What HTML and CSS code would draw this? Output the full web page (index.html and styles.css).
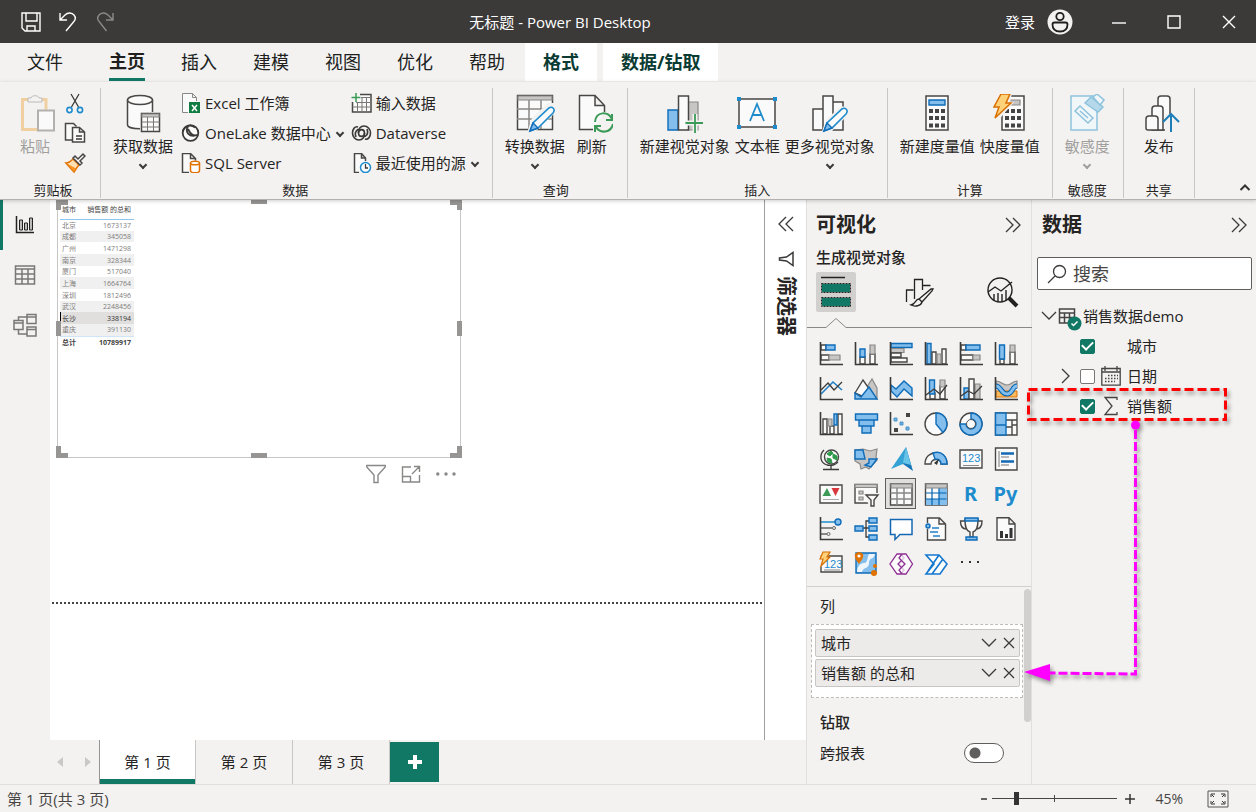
FILE: index.html
```html
<!DOCTYPE html>
<html lang="zh-CN">
<head>
<meta charset="utf-8">
<title>无标题 - Power BI Desktop</title>
<link rel="stylesheet" href="styles.css">
</head>
<body>
<header class="titlebar">
  <div class="quick">
    <button aria-label="保存"><svg width="20" height="20" viewBox="0 0 20 20"><path d="M1 1h18v18H4l-3-3zM5 1v8h11V1M6 19v-5h8v5"/></svg></button>
    <button aria-label="撤消"><svg width="20" height="20" viewBox="0 0 20 20"><path d="M2 1v7h7M2 8l5-5c3-3 7-2.500 9 0s1.500 5-.5 7L8 19"/></svg></button>
    <button aria-label="恢复" class="off"><svg width="20" height="20" viewBox="0 0 20 20"><path d="M18 1v7h-7M18 8l-5-5C10 0 6 .5 4 3s-1.500 5 .5 7l7 9"/></svg></button>
  </div>
  <h1>无标题 - Power BI Desktop</h1>
  <div class="account">
    <button class="login">登录<svg width="26" height="26" viewBox="0 0 26 26"><circle cx="13" cy="13" r="12.500" fill="#f3f2f1" stroke="none"/><g stroke="#201f1e" stroke-width="1.800"><circle cx="13" cy="7.500" r="3.700"/><path d="M7.500 13.500h11q2 0 2 2 0 7-7.500 7t-7.500-7q0-2 2-2z"/></g></svg></button>
    <button class="win" aria-label="最小化"><svg width="16" height="16" viewBox="0 0 16 16"><path d="M1 9h14"/></svg></button>
    <button class="win" aria-label="最大化"><svg width="16" height="16" viewBox="0 0 16 16"><path d="M2 2h12v12H2z"/></svg></button>
    <button class="win" aria-label="关闭"><svg width="16" height="16" viewBox="0 0 16 16"><path d="M2 2l12 12M14 2L2 14"/></svg></button>
  </div>
</header>

<nav class="tabs">
  <button class="file">文件</button><button class="active"><span>主页</span></button><button>插入</button><button>建模</button><button>视图</button><button>优化</button><button>帮助</button><button class="context">格式</button><button class="context">数据/钻取</button>
</nav>

<section class="ribbon">
  <div class="group clipboard">
    <div class="tools">
      <button class="big off"><svg width="36" height="40" viewBox="0 0 36 40"><path d="M8 5.500H2.500v30H17M22 5.500h4v10" stroke="#f0cfa0" stroke-width="3"/><path d="M8 8V4h3c0-3 8-3 8 0h3v4z" fill="#f3f2f1" stroke="#bbb"/><path d="M18 16.500h16v20H18z" fill="#fafafa" stroke="#b3b0ad" stroke-width="2"/></svg>粘贴</button>
      <div class="stack">
        <button aria-label="剪切"><svg width="22" height="22" viewBox="0 0 22 22"><path class="k" d="M7 2l7.500 13M15 2L7.500 15"/><g stroke="#1e8bcd" stroke-width="1.600"><circle cx="5.500" cy="18" r="2.600"/><circle cx="16" cy="18" r="2.600"/></g></svg></button>
        <button aria-label="复制"><svg width="22" height="22" viewBox="0 0 22 22"><path class="kw" d="M8 18H1.500V1.500h8l3 3"/><path class="kw" d="M8.500 5.500h7L20.500 10v10h-12zM15.500 5.500V10h5"/><path class="k" d="M12 14h6M12 17h6"/></svg></button>
        <button aria-label="格式刷"><svg width="22" height="22" viewBox="0 0 22 22"><path d="M2 11c3 0 5-2 7-4l6 6c-2 2-3 4-5 7z" fill="#ffe0b5" stroke="#e07000" stroke-width="1.600"/><path d="M3 11.500l9 5-2 3.500z" fill="#f7931e"/><path class="kw" d="M9 6l2-2 3 3 5-5 2 2-5 5 2 2-2 2z"/></svg></button>
      </div>
    </div>
    <h2>剪贴板</h2>
  </div>
  <div class="group data">
    <div class="tools">
      <button class="big"><svg width="36" height="40" viewBox="0 0 36 40"><path class="kw" d="M2.500 6v25c0 5 25 5 25 0V6"/><ellipse class="kw" cx="15" cy="6" rx="12.500" ry="4.500"/><path d="M15 18h20v21H15z" fill="#f3f2f1"/><path class="kw" d="M16.500 19.500h18v18h-18z"/><path class="g" d="M17 20h17v3H17z"/><path d="M16.500 28h18M16.500 33h18M22.500 23v14M28.500 23v14" stroke="#797775"/></svg>获取数据<i class="chev"></i></button>
      <div class="stack">
        <button class="small"><svg width="20" height="20" viewBox="0 0 20 20"><path d="M7 19.500H1.500V.5h10l4 4V8M11.500.5v4h4" fill="#fafafa" stroke="#888"/><path d="M8 9h11v11H8z" fill="#107c41"/><path d="M11 12l5 6M16 12l-5 6" stroke="#fff" stroke-width="1.500"/></svg>Excel 工作簿</button>
        <button class="small"><svg width="20" height="20" viewBox="0 0 20 20"><circle cx="9.500" cy="10" r="7.800" stroke="#3b3a39" stroke-width="1.800" fill="#fafafa"/><path stroke="#3b3a39" stroke-width="1.800" d="M7 3.500C4 8 7 15 17 12M7 6c3 6 5 7 10 6M2 7.500C4 3 10 1 14 4.500"/></svg>OneLake 数据中心<i class="chev"></i></button>
        <button class="small"><svg width="20" height="20" viewBox="0 0 20 20"><path class="kw" d="M8 19.500H1.500V.5h8l5 5v2M9.500.5v5h5"/><path d="M9.500 10v7.500c0 3 9 3 9 0V10" fill="#fff" stroke="#e07000" stroke-width="1.500"/><ellipse cx="14" cy="10" rx="4.500" ry="1.800" fill="#fff" stroke="#e07000" stroke-width="1.500"/></svg>SQL Server</button>
      </div>
      <div class="stack">
        <button class="small"><svg width="21" height="20" viewBox="0 0 21 20"><path class="kw" d="M9 1.500h11V19H1.500V9"/><path d="M10 4.500h9.500M5 9.500h15M1.500 14H20M6.500 9v10M11 5v14M15.500 5v14" stroke="#797775"/><path d="M5 0v9M.5 4.500h9" stroke="#3b9a57" stroke-width="1.500"/></svg>输入数据</button>
        <button class="small"><svg width="21" height="20" viewBox="0 0 21 20"><g stroke="#3b3a39" stroke-width="1.600"><ellipse cx="10.500" cy="10" rx="3" ry="3.400"/><path d="M13.500 10c.5 4-2 7-5.500 7S1.500 14 1.500 10 4 3 7 4M7.500 10c-.5-4 2-7 5.500-7s6.500 3 6.500 7-2.500 7-5.500 6M5 14c-2-5 1-8 4-8M16 6c2 5-1 8-4 8"/></g></svg>Dataverse</button>
        <button class="small"><svg width="21" height="20" viewBox="0 0 21 20"><path class="kw" d="M8 19.500H3.500V.5h7l4 4.500v3M10.500.5V5h4"/><circle cx="14.500" cy="14.500" r="5" fill="#fff" stroke="#1e8bcd" stroke-width="1.500"/><path class="k" d="M14.500 11v4H17"/></svg>最近使用的源<i class="chev"></i></button>
      </div>
    </div>
    <h2>数据</h2>
  </div>
  <div class="group query">
    <div class="tools">
      <button class="big"><svg width="40" height="40" viewBox="0 0 40 40"><path class="kw" d="M2.500 1.500h35v34h-35z"/><path class="g" d="M3 2h34v4H3z"/><path d="M2 15h35M2 25h35M14 6v29M26 6v29" stroke="#8a8886" stroke-width="1.500"/><path d="M12 39l5-15 16-15 8 0v9L20 38z" fill="#f3f2f1"/><path class="pen" d="M15 37l3-8 16-15c3-2 7 1 4 5L23 34z"/><path class="b" d="M15 37l3-8 5 5z"/></svg>转换数据<i class="chev"></i></button>
      <button class="big"><svg width="36" height="40" viewBox="0 0 36 40"><path class="kw" d="M16 35.500H2.500v-34H18l9.500 10V18M18 1.500v10h9.500"/><g stroke="#3b9a57" stroke-width="2"><path d="M18 28c1-11 13-11 17-3M35 20v6h-6M36 30c-2 9-13 10-17 3M18 38v-6h6"/></g></svg>刷新</button>
    </div>
    <h2>查询</h2>
  </div>
  <div class="group insert">
    <div class="tools">
      <button class="big"><svg width="36" height="40" viewBox="0 0 36 40"><path class="b" d="M1 16h10v20H1z"/><path class="g" d="M21 8h10v28H21z"/><path class="kw" d="M11.500 2h10v34h-10z"/><path d="M28 20v19M18 29h19" stroke="#f3f2f1" stroke-width="5"/><path d="M28 20v19M18.500 29H37" stroke="#3b9a57" stroke-width="1.800"/></svg>新建视觉对象</button>
      <button class="big"><svg width="40" height="40" viewBox="0 0 40 40"><path class="kw" d="M2 5h36v28H2z"/><path d="M13 27l7-17 7 17M15.500 21h9" stroke="#1e8bcd" stroke-width="1.800"/><path d="M0 3h4v4H0zM36 3h4v4h-4zM0 31h4v4H0zM36 31h4v4h-4z" fill="#1e8bcd"/></svg>文本框</button>
      <button class="big"><svg width="38" height="40" viewBox="0 0 38 40"><path class="kw" d="M2 15h10v21H2zM22 8h10v28H22zM12 2h10v34H12z"/><path d="M10 40l5-14 15-14 8 2v6L20 38z" fill="#f3f2f1"/><path class="pen" d="M13 37l3-8 15-14c3-2 7 1 4 5L21 34z"/><path class="b" d="M13 37l3-8 5 5z"/></svg>更多视觉对象<i class="chev"></i></button>
    </div>
    <h2>插入</h2>
  </div>
  <div class="group calc">
    <div class="tools">
      <button class="big"><svg width="26" height="40" viewBox="0 0 26 40"><path class="kw" d="M2 2h22v34H2z"/><path class="b" d="M5 6h16v5H5z"/><path d="M5 17h16M5 24h16M5 31.500h16" stroke="#444" stroke-width="4" stroke-dasharray="4 2"/></svg>新建度量值</button>
      <button class="big"><svg width="34" height="40" viewBox="0 0 34 40"><path class="kw" d="M9 2h22v34H9z"/><path class="g" d="M14 6h13v5H14z"/><path d="M12 17h16M12 24h16M12 31.500h16" stroke="#444" stroke-width="4" stroke-dasharray="4 2"/><path d="M7-1h12l-2 9h4L3 29V20H0z" fill="#f3f2f1"/><path d="M8 0h9l-4 9h5L2 24l4-11H1z" fill="#ffd27a" stroke="#d86f00" stroke-width="1.500"/></svg>快度量值</button>
    </div>
    <h2>计算</h2>
  </div>
  <div class="group sens">
    <div class="tools">
      <button class="big off"><svg width="36" height="40" viewBox="0 0 36 40"><g stroke="#8ec3de" stroke-width="1.500" fill="#f1f6f9"><path d="M2 2h26v34H2z"/><path d="M6 17l5-5 13 12-5 5zM11 17l8 7"/><path d="M16 9l6-6 12 10-5 5z" fill="#b5d9eb"/><path d="M24 3l4-3 7 6-4 5z"/></g></svg>敏感度<i class="chev"></i></button>
    </div>
    <h2>敏感度</h2>
  </div>
  <div class="group share">
    <div class="tools">
      <button class="big"><svg width="36" height="40" viewBox="0 0 36 40"><g class="kw"><path d="M14 12V5q0-3 3-3h6q3 0 3 3v31H14z"/><path d="M8 22v-7q0-3 3-3h5q3 0 3 3v21H8z"/><path d="M2 34V25q0-3 3-3h6q3 0 3 3v11H4q-2 0-2-2z"/></g><path d="M21 20h12v19H21z" fill="#f3f2f1"/><path d="M27 38V20M19 28l8-8 8 8" stroke="#1e7fb8" stroke-width="2"/></svg>发布</button>
    </div>
    <h2>共享</h2>
  </div>
  <button class="collapse" aria-label="折叠功能区"><svg width="12" height="12" viewBox="0 0 12 12"><path d="M1.500 8L6 3.500 10.500 8" stroke="#333" stroke-width="2"/></svg></button>
</section>

<main class="work">
  <div class="report">
    <div class="stage">
      <nav class="rail">
        <button class="active" aria-label="报表视图"><svg width="20" height="20" viewBox="0 0 20 20"><path d="M1.500 1v16.500H19" stroke="#222" stroke-width="1.500"/><path d="M4.500 5h3v10h-3zM9.500 8h3v7h-3zM14.500 3h3v12h-3z" fill="#bbb" stroke="#222"/></svg></button>
        <button aria-label="表格视图"><svg width="22" height="22" viewBox="0 0 22 22"><path d="M1.500 2h19v18h-19zM1.500 5h19M1.500 10h19M1.500 15h19M8 5v15M14 5v15" stroke="#7a7875" stroke-width="1.500"/></svg></button>
        <button aria-label="模型视图"><svg width="24" height="24" viewBox="0 0 24 24"><path d="M1 7.500h9v9H1zM1 10h9M14 1.500h9v9h-9zM14 4h9M14 14h9v9h-9zM14 16.500h9M5.500 7V4H14M5.500 17v4H14" stroke="#7a7875" stroke-width="1.500"/></svg></button>
      </nav>
      <div class="canvas">
        <div class="visual">
          <i class="handle tl"></i><i class="handle tc"></i><i class="handle tr"></i><i class="handle ml"></i><i class="handle mr"></i><i class="handle bl"></i><i class="handle bc"></i><i class="handle br"></i>
          <table>
            <thead><tr><th>城市</th><th>销售额 的总和</th></tr></thead>
            <tbody>
              <tr><td>北京</td><td>1673137</td></tr>
              <tr><td>成都</td><td>345058</td></tr>
              <tr><td>广州</td><td>1471298</td></tr>
              <tr><td>南京</td><td>328344</td></tr>
              <tr><td>厦门</td><td>517040</td></tr>
              <tr><td>上海</td><td>1664764</td></tr>
              <tr><td>深圳</td><td>1812496</td></tr>
              <tr><td>武汉</td><td>2248456</td></tr>
              <tr class="current"><td>长沙</td><td>338194</td></tr>
              <tr><td>重庆</td><td>391130</td></tr>
            </tbody>
            <tfoot><tr><td>总计</td><td>10789917</td></tr></tfoot>
          </table>
        </div>
        <div class="visual-actions">
          <button aria-label="筛选器"><svg width="20" height="20" viewBox="0 0 20 20"><path d="M.8 1.500h18.400v1.500L12 11v7.500H8V11L.8 3z"/></svg></button>
          <button aria-label="焦点模式"><svg width="20" height="20" viewBox="0 0 20 20"><path d="M10 3H1.500v15h17v-7M1.500 12.500h8V18M11 10l7-7M13 2.500h5.500V8"/></svg></button>
          <button aria-label="更多选项"><svg width="20" height="20" viewBox="0 0 20 20"><g fill="#8a8886" stroke="none"><circle cx="1.800" cy="10" r="1.700"/><circle cx="10" cy="10" r="1.700"/><circle cx="18" cy="10" r="1.700"/></g></svg></button>
        </div>
        <div class="page-edge"></div>
      </div>
      <aside class="filters">
        <button aria-label="展开筛选器"><svg width="16" height="16" viewBox="0 0 16 16"><path class="k" d="M8 1L1 8l7 7M15 1L8 8l7 7"/></svg></button>
        <svg width="16" height="16" viewBox="0 0 16 16"><path d="M15 1.500v13L8.500 10 1.500 9V7l7-1z" stroke="#3b3a39" stroke-width="1.500"/></svg>
        <h3>筛选器</h3>
      </aside>
    </div>
    <nav class="pages">
      <button class="step" aria-label="上一页"><svg width="6" height="10" viewBox="0 0 6 10"><path d="M6 0v10L0 5z" fill="#c8c8c8"/></svg></button>
      <button class="step" aria-label="下一页"><svg width="6" height="10" viewBox="0 0 6 10"><path d="M0 0v10l6-5z" fill="#c8c8c8"/></svg></button>
      <button class="page active">第 1 页</button><button class="page">第 2 页</button><button class="page">第 3 页</button>
      <button class="add" aria-label="新建页"><svg width="14" height="14" viewBox="0 0 14 14"><path d="M7 0v14M0 7h14" stroke="#fff" stroke-width="4"/></svg></button>
    </nav>
  </div>

  <aside class="viz">
    <header><h3>可视化</h3><button aria-label="折叠"><svg width="18" height="16" viewBox="0 0 18 16"><path class="k" d="M2 1l7 7-7 7M9 1l7 7-7 7"/></svg></button></header>
    <h4>生成视觉对象</h4>
    <div class="modes">
      <button class="active" aria-label="生成视觉对象"><svg width="40" height="40" viewBox="0 0 40 40"><path d="M5 5.500h24" stroke="#222" stroke-width="1.500"/><path d="M6 12h28v8H6zM6 26h28v8H6z" fill="#117865"/><path d="M5.500 11.500h29v9h-29zM5.500 25.500h29v9h-29z" stroke="#222" stroke-dasharray="2 1"/></svg></button>
      <button aria-label="设置视觉对象格式"><svg width="40" height="40" viewBox="0 0 40 40"><g stroke="#222" stroke-width="1.300"><path d="M7.500 30V18h7M15.500 27V7.500h8V18M23.500 13.500h8M12 33c4 2 10 1 11-3l-3-3c-4 0-3 5-8 6zM20 27L32 17l2 0-1 2-10 11"/></g></svg></button>
      <button aria-label="分析"><svg width="40" height="40" viewBox="0 0 40 40"><g stroke="#222" stroke-width="1.400"><circle cx="18" cy="18" r="12"/><path d="M6 20l7-5 6 4 11-9M12 28v-6M16 29v-8M20 29v-7M24 28V18"/><path d="M27 26l8 8" stroke-width="4"/></g></svg></button>
    </div>
    <svg class="caret" viewBox="0 0 225 10" width="225" height="10"><path d="M0 9.500h19l10-9 10 9h186" stroke="#8a8886"/></svg>
    <div class="gallery">
      <button aria-label="堆积条形图"><svg viewBox="0 0 24 24"><path class="w" d="M2 3h5v5H2zM2 13h8v5H2z"/><path class="b" d="M7 3h9v5H7z"/><path class="g" d="M10 13h11v5H10z"/><path class="ax" d="M1.500 0v22.500H24"/></svg></button>
      <button aria-label="堆积柱形图"><svg viewBox="0 0 24 24"><path class="w" d="M6 15h5v7H6zM16 12h5v10h-5z"/><path class="b" d="M6 7h5v8H6z"/><path class="g" d="M16 3h5v9h-5z"/><path class="ax" d="M1.500 0v22.500H24"/></svg></button>
      <button aria-label="簇状条形图"><svg viewBox="0 0 24 24"><path class="b" d="M2 1.500h21v4H2z"/><path class="g" d="M2 6.500h13v4H2z"/><path class="w" d="M2 11h10v4H2zM2 16h16v4H2z"/><path class="ax" d="M1.500 0v22.500H24"/></svg></button>
      <button aria-label="簇状柱形图"><svg viewBox="0 0 24 24"><path class="b" d="M3 1.500h4V22H3z"/><path class="w" d="M8 10h4v12H8zM18 7h4v15h-4z"/><path class="g" d="M13 12h4v10h-4z"/><path class="ax" d="M1.500 0v22.500H24"/></svg></button>
      <button aria-label="百分比堆积条形图"><svg viewBox="0 0 24 24"><path class="w" d="M2 3h5v5H2zM2 13h12v5H2z"/><path class="b" d="M7 3h14v5H7z"/><path class="g" d="M14 13h7v5h-7z"/><path class="ax" d="M1.500 0v22.500H24"/></svg></button>
      <button aria-label="百分比堆积柱形图"><svg viewBox="0 0 24 24"><path class="w" d="M6 17h4v5H6zM16 10h5v12h-5z"/><path class="b" d="M5.500 3h5v14h-5z"/><path class="g" d="M16 3h5v7h-5z"/><path class="ax" d="M1.500 0v22.500H24"/></svg></button>

      <button aria-label="折线图"><svg viewBox="0 0 24 24"><path d="M2 17L14 5l9 8" stroke="#2180c8" stroke-width="1.600"/><path class="k" stroke-width="1.600" d="M2 13l7-7 6 7 8-8"/><path class="ax" d="M1.500 0v22.500H24"/></svg></button>
      <button aria-label="分区图"><svg viewBox="0 0 24 24"><path class="g" d="M11 13l7-11 5 9v11z"/><path class="w" d="M1 16L9 3l7 10-4 8z"/><path class="b" d="M1 16l6 4 8-10 8 12H1z"/></svg></button>
      <button aria-label="堆积面积图"><svg viewBox="0 0 24 24"><path class="b" d="M2 8l5 4 8-8 8 7v8l-8-7-7 8-6-6z"/><path class="ax" d="M1.500 0v22.500H24"/></svg></button>
      <button aria-label="折线和堆积柱形图"><svg viewBox="0 0 24 24"><path class="w" d="M6 16h5v6H6zM16 9h5v13h-5z"/><path class="b" d="M5.500 3h5v14h-5z"/><path class="g" d="M16 3h5v7h-5z"/><path class="k" stroke-width="1.600" d="M2 18l8-6 6 5 7-9"/><path class="ax" d="M1.500 0v22.500H24"/></svg></button>
      <button aria-label="折线和簇状柱形图"><svg viewBox="0 0 24 24"><path class="b" d="M5 11h5v11H5z"/><path class="g" d="M16 7h5v15h-5z"/><path class="w" d="M10 2h5v20h-5z"/><path class="k" stroke-width="1.600" d="M2 19l7-5 6 3 8-8"/><path class="ax" d="M1.500 0v22.500H24"/></svg></button>
      <button aria-label="功能区图"><svg viewBox="0 0 24 24"><path class="g" d="M2 4c5 0 7 4 11 4s6-4 10-4v7c-5 0-6 6-10 6S7 11 2 11z"/><path d="M2 14h21v6H2z" fill="#f9b95c" stroke="#df7200"/><path d="M2 9c5 0 5 8 11 8s5-8 10-8" stroke="#0063b1" stroke-width="5"/><path d="M2 9c5 0 5 8 11 8s5-8 10-8" stroke="#83beec" stroke-width="3"/><path class="ax" d="M1.500 0v22.500H24"/></svg></button>

      <button aria-label="瀑布图"><svg viewBox="0 0 24 24"><path class="w" d="M4 7h4v15H4zM11 14h4v8h-4zM19 2h4v20h-4z"/><path class="g" d="M9 7h4v7H9z"/><path class="b" d="M15 2h3v11h-3z"/><path class="ax" d="M1.500 0v22.500H24"/></svg></button>
      <button aria-label="漏斗图"><svg viewBox="0 0 24 24"><path class="b" d="M1.500 2h22v6h-22zM5 8h15v6H5zM8 14h9v7H8z"/></svg></button>
      <button aria-label="散点图"><svg viewBox="0 0 24 24"><path d="M17 1h4v4h-4zM5 16h4v4H5z" fill="#444"/><path d="M5 6h3v3H5zM11 10h3v3h-3zM17 15h3v3h-3z" fill="#6aaede" stroke="#4d95ca"/><path class="ax" d="M1.500 0v22.500H24"/></svg></button>
      <button aria-label="饼图"><svg viewBox="0 0 24 24"><circle class="w" cx="12" cy="12" r="11"/><path class="b" d="M12 1v11l7 8.500C26 14 23 1 12 1z"/></svg></button>
      <button aria-label="环形图"><svg viewBox="0 0 24 24"><circle class="w" cx="12" cy="12" r="11"/><path class="b" d="M12 1v6a5 5 0 1 1-5 5H1A11 11 0 1 0 12 1z"/><circle cx="12" cy="12" r="4.500" stroke="#555"/></svg></button>
      <button aria-label="树状图"><svg viewBox="0 0 24 24"><path class="w" d="M1.500 1h21.500v22H1.500zM12 8h11M18 8v15M12 15h6M18 13h5"/><path class="b" d="M1.500 1H12v12H1.500zM1.500 13H12v10H1.500z"/></svg></button>

      <button aria-label="地图"><svg viewBox="0 0 24 24"><circle class="w" cx="12.500" cy="10" r="7"/><path d="M8 7l4-3 2 2-3 3zM14 7l4 2v4l-4-2zM8 11l4 1 1 4-4-1z" fill="#2e9a4a" stroke="#2e9a4a"/><path class="k" stroke-width="1.800" d="M5 3c-5 5-4 13 3 15 4 1 9 0 11-3M12 18v4M4 22.500h16"/></svg></button>
      <button aria-label="着色地图"><svg viewBox="0 0 24 24"><path class="g" d="M1 3l8-1 7 2 7-2-1 8 1 3-8 9-3-2-5 2-1-5-5-3z"/><path class="b" d="M1 3h8l2 9H1zM15 12h8l-6 8-6-2 4-2z"/></svg></button>
      <button aria-label="Azure 地图"><svg viewBox="0 0 24 24"><path d="M17 0L2 22l12-5z" fill="#35a2d5"/><path d="M17 0l7 24-10-7z" fill="#1775b7"/><path d="M17 0l5 18-8-2z" fill="#66c4e8"/></svg></button>
      <button aria-label="仪表"><svg viewBox="0 0 24 24"><path class="w" d="M1 17C1 2 23 2 23 17h-6c0-6-10-6-10 0z"/><path class="b" d="M9 6c9-3 14 4 14 11h-6c0-4-3-5-6-5z"/><path d="M10 16l5-4-2 6z" fill="#333"/></svg></button>
      <button aria-label="卡片图"><svg viewBox="0 0 24 24"><path class="w" d="M1 3h22v18H1z"/><path d="M4 18.500h16" stroke="#888"/><text x="3" y="15" font-size="11">123</text></svg></button>
      <button aria-label="多行卡"><svg viewBox="0 0 24 24"><path class="w" d="M1.500 1h21.500v22H1.500z"/><path d="M7 6.500h13M7 14.500h13" stroke="#1468b3" stroke-width="2.500"/><path d="M5 4v16M7 10h8M7 18h8" stroke="#777"/></svg></button>

      <button aria-label="KPI"><svg viewBox="0 0 24 24"><path class="w" d="M1 3h22v18H1z"/><path d="M4 17.500h16" stroke="#aaa"/><path d="M3.500 14L8 6l4 8z" fill="#3b9a57"/><path d="M12.500 6h8l-4 8z" fill="#d9363e"/></svg></button>
      <button aria-label="切片器"><svg viewBox="0 0 24 24"><path class="w" d="M1 2.500h22V21H1z"/><path class="g" d="M1 2.500h22v3H1zM5 9h4v3H5zM5 15h4v3H5z"/><path d="M11 11h14v14H15z" fill="#f3f2f1"/><path class="w" d="M12 13h12l-4 5v6h-3v-6z"/></svg></button>
      <button class="chosen" aria-label="表"><svg viewBox="0 0 24 24"><path class="w" d="M1.500 2h21.500v21H1.500z"/><path d="M1.500 11h21M1.500 17h21M8 5v18M15 5v18" stroke="#888" stroke-width="1.500"/><path class="g" d="M2 2h21v4H2z"/></svg></button>
      <button aria-label="矩阵"><svg viewBox="0 0 24 24"><path class="w" d="M1.500 2h21.500v21H1.500z"/><path d="M15 6h8v17H2v-6h13z" fill="#83beec"/><path d="M1.500 11h21M1.500 17h21M8 5v18M15 5v18" stroke="#0063b1" stroke-width="1.200"/><path class="g" d="M2 2h21v4H2z"/></svg></button>
      <button aria-label="R 脚本视觉对象"><b>R</b></button>
      <button aria-label="Python 视觉对象"><b>Py</b></button>

      <button aria-label="关键影响者"><svg viewBox="0 0 24 24"><path d="M2 5h15" stroke="#1e8bcd" stroke-width="1.500"/><circle class="b" cx="19" cy="5" r="3"/><path d="M2 11h11M2 17h6" stroke="#666" stroke-width="1.500"/><circle cx="15" cy="11" r="1.500" stroke="#666"/><circle cx="9.500" cy="17" r="1.500" stroke="#666"/><path class="ax" d="M1.500 0v22.500H24"/></svg></button>
      <button aria-label="分解树"><svg viewBox="0 0 24 24"><path class="k" stroke-width="1.500" d="M9 11h6M15 4h-3v16h3"/><path class="b" d="M1 9h8v5H1zM15 1h8v5h-8zM15 9h8v5h-8zM15 18h8v5h-8z"/></svg></button>
      <button aria-label="问答"><svg viewBox="0 0 24 24"><path d="M1.500 2.500h21.500v15H11l-5 5v-5H1.500z" fill="#fff" stroke="#1468b3" stroke-width="1.500"/></svg></button>
      <button aria-label="智能叙述"><svg viewBox="0 0 24 24"><path class="w" d="M3.500 1h12l6 6v16h-18zM15 1v6h6"/><path d="M1 6h6v6H1z" fill="#f3f2f1"/><circle class="b" cx="4" cy="9" r="2"/><path d="M8 11h7M6 15h8M9 19h7" stroke="#2180c8" stroke-width="1.300"/></svg></button>
      <button aria-label="目标"><svg viewBox="0 0 24 24"><path class="w" d="M6 4H1.500c0 6 2 8 6 8M18 4h5c0 6-2 8-6 8"/><path class="w" d="M6 2h13c0 8-1 12-5 13v5h-3v-5C7 14 6 10 6 2z"/><path class="b" d="M6 1h13v3H6zM7 20h11v3H7z"/></svg></button>
      <button aria-label="分页报表"><svg viewBox="0 0 24 24"><path class="w" d="M3 .8h12l6 6V23H3zM15 1v6h6"/><path d="M6 14h3v7H6zM11 17h3v4h-3zM15.500 11h3v10h-3z" fill="#333"/></svg></button>

      <button aria-label="新卡片"><svg viewBox="0 0 24 24"><path class="w" d="M2 4h21v16H2z"/><path d="M5 18h16" stroke="#888"/><text x="5" y="16" font-size="11">123</text><path d="M2-1h9L6 12l-6 4z" fill="#f3f2f1"/><path d="M4 0h7L8 5h3L2 14l2-7H1z" fill="#ffd27a" stroke="#d86f00" stroke-width="1.200"/></svg></button>
      <button aria-label="ArcGIS 地图"><svg viewBox="0 0 24 24"><path class="b" d="M2 1h20v20H2z"/><path d="M15 2h6c-1 6-6 3-6 9s-6 4-7 9H3c0-5 3-9 7-9s3-6 5-9z" fill="#eef6fc"/><path d="M1 2q4-4 8 0c1 4-2 7-4 10C3 9 0 6 1 2z" fill="#df7200"/><circle cx="5" cy="4" r="1.600" fill="#fff"/><circle cx="21" cy="14" r="2" fill="#df7200"/><circle cx="20" cy="21" r="3" fill="#df7200"/></svg></button>
      <button aria-label="Power Apps"><svg viewBox="0 0 24 24"><g fill="#fff" fill-opacity=".7" stroke="#8e2d93" stroke-width="1.300"><path d="M8 2h4l3 4-6 6 6 6-3 4H8l-7-10z"/><path d="M17 2h-4l-3 4 6 6-6 6 3 4h4l6.500-10z"/></g></svg></button>
      <button aria-label="Power Automate"><svg viewBox="0 0 24 24"><path d="M2 3h13l8 9-7 10H2l8-10zM15 3L4 19M19 7L8 22" fill="#fff" fill-opacity=".8" stroke="#1478cf" stroke-width="1.600"/></svg></button>
      <button aria-label="获取更多视觉对象"><svg viewBox="0 0 24 24"><path d="M2 9h2v2H2zM10 9h2v2h-2zM18 9h2v2h-2z" fill="#333"/></svg></button>
    </div>
    <div class="wells">
      <h5>列</h5>
      <ul>
        <li>城市<button aria-label="选项"><svg width="16" height="10" viewBox="0 0 16 10"><path class="k" d="M1 1l7 7 7-7"/></svg></button><button aria-label="删除"><svg width="12" height="12" viewBox="0 0 12 12"><path class="k" d="M1 1l10 10M11 1L1 11"/></svg></button></li>
        <li>销售额 的总和<button aria-label="选项"><svg width="16" height="10" viewBox="0 0 16 10"><path class="k" d="M1 1l7 7 7-7"/></svg></button><button aria-label="删除"><svg width="12" height="12" viewBox="0 0 12 12"><path class="k" d="M1 1l10 10M11 1L1 11"/></svg></button></li>
      </ul>
      <h5 class="strong">钻取</h5>
      <label class="switch">跨报表<input type="checkbox"></label>
      <i class="scroll"></i>
    </div>
  </aside>

  <aside class="fields">
    <header><h3>数据</h3><button aria-label="折叠"><svg width="18" height="16" viewBox="0 0 18 16"><path class="k" d="M2 1l7 7-7 7M9 1l7 7-7 7"/></svg></button></header>
    <label class="search"><svg width="20" height="20" viewBox="0 0 20 20"><circle class="k" cx="12.500" cy="7.500" r="6"/><path class="k" d="M8 12l-7 7"/></svg><input type="text" placeholder="搜索" aria-label="搜索"></label>
    <div class="tree">
      <div class="node root"><button aria-label="折叠"><svg width="16" height="10" viewBox="0 0 16 10"><path class="k" d="M1 1l7 7 7-7"/></svg></button><svg class="tbl" width="24" height="24" viewBox="0 0 24 24"><path d="M1.500 2h15v14h-15zM1.500 6h15M1.500 10.500h15M6.500 6v10M11.500 6v10" stroke="#444" stroke-width="1.500"/><circle cx="16.500" cy="16.500" r="7" fill="#117865"/><path d="M13.500 16.500l2 2 4-4" stroke="#fff" stroke-width="1.500"/></svg><span>销售数据demo</span></div>
      <label class="node leaf"><input type="checkbox" checked><i class="kind"></i>城市</label>
      <div class="node branch"><button aria-label="展开"><svg width="10" height="16" viewBox="0 0 10 16"><path class="k" d="M1 1l7 7-7 7"/></svg></button><label><input type="checkbox"><i class="kind"><svg width="20" height="20" viewBox="0 0 20 20"><path d="M.8 2.500h18.400v16.700H.8zM.8 6h18.400M4 0v5M16 0v5" stroke="#444" stroke-width="1.300"/><path d="M7 9.500h10M4 12.500h13M4 15.500h10" stroke="#444" stroke-dasharray="1.500 1.500" stroke-width="1.500"/></svg></i>日期</label></div>
      <label class="node leaf"><input type="checkbox" checked><i class="kind"><svg width="20" height="20" viewBox="0 0 20 20"><path d="M16 4V1.500H4l7 8.500-7 8.500h12V16" stroke="#444" stroke-width="1.300"/></svg></i>销售额</label>
    </div>
    <svg class="callout" width="240" height="320" viewBox="0 0 240 320">
      <rect x="10.500" y="9.500" width="197" height="30" stroke="#f00" stroke-width="3" stroke-dasharray="9 4"/>
      <circle cx="117.500" cy="45" r="4.500" fill="#f0f"/>
      <path d="M117.500 50v244l-90-1" stroke="#f0f" stroke-width="3" stroke-dasharray="9 3"/>
      <path d="M6 292l26-8v17z" fill="#f0f"/>
    </svg>
  </aside>
</main>

<footer class="status">
  <span>第 1 页(共 3 页)</span>
  <div class="zoom">
    <button aria-label="缩小"><svg width="8" height="8" viewBox="0 0 8 8"><path d="M1 4h6" stroke="#333" stroke-width="1.500"/></svg></button>
    <input type="range" min="0" max="100" value="18" aria-label="缩放">
    <button aria-label="放大"><svg width="10" height="10" viewBox="0 0 10 10"><path d="M0 5h10M5 0v10" stroke="#333" stroke-width="1.500"/></svg></button>
    <output>45%</output>
    <button aria-label="适应页面"><svg width="22" height="18" viewBox="0 0 22 18"><path d="M1 1h20v16H1z" stroke="#555"/><path d="M4 7V4h4M14 4h4v3M18 11v3h-4M8 14H4v-3M5 5l2 2M17 5l-2 2M17 13l-2-2M5 13l2-2" stroke="#333"/></svg></button>
  </div>
</footer>
</body>
</html>
```
FILE: styles.css
```css
* { box-sizing: border-box; }
body {
  margin: 0;
  height: 100vh;
  display: flex;
  flex-direction: column;
  overflow: hidden;
  background: #f3f2f1;
  color: #252423;
  font: 15px/20px "Open Sans", "Noto Sans CJK SC", sans-serif;
}
button { border: 0; padding: 0; background: none; font: inherit; color: inherit; display: flex; align-items: center; justify-content: center; }
h1, h2, h3, h4, h5, ul { margin: 0; padding: 0; font: inherit; }
svg { fill: none; flex: none; display: block; }
.k { stroke: #3b3a39; stroke-width: 1.3; }
.kw { stroke: #494745; stroke-width: 1.5; fill: #fafafa; }
.w { stroke: #494745; stroke-width: 1.4; fill: #fafafa; }
.b { stroke: #0f6cb8; stroke-width: 1.4; fill: #83beec; }
.g { stroke: #8a8886; stroke-width: 1.2; fill: #c8c6c4; }
.ax { stroke: #3b3a39; stroke-width: 1.6; }
.pen { stroke: #1e8bcd; stroke-width: 1.6; fill: #fafafa; }

/* title bar */
.titlebar { height: 43px; flex: none; display: flex; align-items: center; background: #3b3a39; color: #fff; }
.titlebar svg { stroke: #fff; stroke-width: 1.4; }
.quick { display: flex; gap: 17px; padding-left: 21px; }
.quick .off { opacity: .4; }
.titlebar h1 { flex: 1; text-align: center; }
.account { display: flex; align-items: center; }
.login { gap: 12px; margin-right: 18px; }
.win { width: 55px; height: 43px; }

/* ribbon tabs */
.tabs { display: flex; height: 39px; flex: none; font-size: 18px; color: #201f1e; }
.tabs button { padding: 0 18px; height: 38px; white-space: nowrap; }
.tabs .file { margin: 0 10px 0 9px; }
.tabs .active { font-weight: 700; align-items: stretch; }
.tabs .active span { line-height: 36px; border-bottom: 3px solid #117865; }
.tabs .context { margin-left: 2px; background: #fff; font-weight: 700; color: #0b3b33; }
.tabs .context + .context { margin-left: 6px; }

/* ribbon */
.ribbon { display: flex; flex: none; height: 118px; padding: 6px 0 1px; position: relative; z-index: 1; border-bottom: 1px solid #b3b0ad; box-shadow: 0 1px 4px rgba(0, 0, 0, .2); background: #f3f2f1; }
.group { display: flex; flex-direction: column; justify-content: space-between; border-right: 1px solid #c8c6c4; padding: 0 12px; white-space: nowrap; }
.group h2 { text-align: center; font-size: 13px; line-height: 16px; }
.tools { display: flex; gap: 5px; }
.clipboard { padding: 0 14px 0 20px; }
.clipboard .tools { gap: 14px; }
.clipboard .stack button { height: 30px; }
.data { padding-right: 14px; }
.data .tools { gap: 8px; }
.query { padding-right: 20px; }
.query .tools { gap: 12px; }
.sens { padding-right: 13px; }
.share { padding: 0 20px; }
.big { flex-direction: column; justify-content: flex-start; align-items: center; padding-top: 6px; line-height: 24px; }
.clipboard .big, .share .big, .query .big + .big { width: 30px; align-items: flex-start; }
.off { color: #a19f9d; }
.stack { display: flex; flex-direction: column; align-items: flex-start; }
.small { height: 30px; gap: 4px; }
.small .chev { margin-left: 2px; }
.chev { width: 6px; height: 6px; border: solid #3b3a39; border-width: 0 2px 2px 0; transform: rotate(45deg); }
.big .chev { margin-top: 4px; }
.off .chev { border-color: #a19f9d; }
.collapse { margin-left: auto; align-self: flex-end; padding: 0 5px 4px 0; }

/* workspace */
.work { flex: 1; display: flex; min-height: 0; }
.report { flex: 1; display: flex; flex-direction: column; min-width: 0; }
.stage { flex: 1; display: flex; min-height: 0; background: #fff; }
.rail { width: 50px; background: #f3f2f1; }
.rail button { width: 100%; height: 50px; }
.rail .active { box-shadow: inset 3px 0 #117865; }
.canvas { flex: 1; min-width: 0; padding: 0 2px; }
.visual { position: relative; width: 404px; height: 258px; margin-left: 5px; border: solid #c8c6c4; border-width: 0 1px 1px; padding-left: 2px; }
.handle { position: absolute; border: 0 solid #979593; }
.tl { left: -2px; top: 0; width: 12px; height: 10px; border-width: 5px 0 0 5px; }
.tr { right: -2px; top: 0; width: 12px; height: 10px; border-width: 5px 5px 0 0; }
.bl { left: -2px; bottom: -1px; width: 12px; height: 12px; border-width: 0 0 5px 5px; }
.br { right: -2px; bottom: -1px; width: 12px; height: 12px; border-width: 0 5px 5px 0; }
.tc, .bc { left: 193px; width: 16px; border-top-width: 5px; }
.tc { top: -1px; }
.bc { bottom: -1px; }
.ml, .mr { top: 121px; height: 15px; border-left-width: 5px; }
.ml { left: -2px; }
.mr { right: -2px; }
table { border-collapse: collapse; width: 74px; font-size: 7px; line-height: 9px; color: #7f7d7b; }
th, td { padding: 0 3px 0 2px; height: 12px; text-align: right; white-space: nowrap; font-weight: 400; }
th:first-child, td:first-child { text-align: left; }
thead th { height: 19px; color: #444; border-bottom: 1px solid #8cc6f2; }
tbody tr:nth-child(3n+2) td { height: 11px; }
tbody tr:nth-child(even) { background: #f0f0f0; }
tbody .current { background: #e1dfdd; color: #333; }
tbody .current td:first-child { box-shadow: inset 1px 0 #000; }
tfoot td { border-top: 1px solid #cfe6fa; font-weight: 700; color: #444; }
.visual-actions { display: flex; gap: 15px; margin: 6px 0 0 314px; }
.visual-actions svg { stroke: #8a8886; stroke-width: 1.4; }
.page-edge { border-top: 2px dotted #444; margin-top: 118px; }
.filters { width: 42px; border-left: 1px solid #a19f9d; display: flex; flex-direction: column; align-items: center; padding-top: 16px; gap: 19px; }
.filters h3 { writing-mode: vertical-rl; text-orientation: sideways; font-size: 20px; font-weight: 700; line-height: 24px; margin-top: -10px; }

/* page tabs */
.pages { display: flex; height: 44px; flex: none; padding-left: 57px; }
.step { width: 6px; margin-right: 22px; }
.step + .step { margin-right: 8px; }
.page { width: 97px; border-right: 1px solid #c8c6c4; }
.page.active { background: #fff; border-left: 1px solid #979593; box-shadow: inset 0 -5px #117865; }
.add { width: 49px; height: 40px; margin-top: 2px; background: #117865; }

/* side panes */
.viz { width: 226px; border-right: 1px solid #e1dfdd; border-left: 1px solid #e1dfdd; display: flex; flex-direction: column; }
.viz header, .fields header { display: flex; justify-content: space-between; align-items: center; height: 50px; padding: 0 9px; }
.viz h3, .fields h3 { font-size: 20px; font-weight: 700; }
.viz h4 { font-weight: 500; padding: 0 9px; line-height: 14px; margin-bottom: 8px; }
.modes { display: flex; justify-content: space-between; padding: 0 9px; }
.modes button { width: 40px; height: 40px; border-radius: 2px; }
.modes .active { background: #d2d0ce; }
.caret { margin-top: 6px; flex: none; }
.gallery { display: grid; grid-template-columns: repeat(6, 35px); grid-auto-rows: 35px; padding: 8px 0 5px 6px; border-bottom: 1px solid #d2d0ce; }
.gallery button { padding: 3px; }
.gallery svg { width: 24px; height: 24px; overflow: visible; }
.gallery text { fill: #1e8bcd; font-family: "Liberation Sans", sans-serif; }
.gallery b { font-size: 20px; font-weight: 700; font-family: "Noto Sans", sans-serif; color: #1e8bcd; }
.gallery .chosen { border: 1px solid #605e5c; background: #e1dfdd; margin: 2px; padding: 0; }
.wells { flex: 1; position: relative; padding: 9px 8px 0 4px; }
.wells h5 { padding-left: 9px; }
.wells .strong { font-weight: 500; }
.wells ul { list-style: none; background: #fff; border: 1px dashed #bebbb8; padding: 4px 2px 10px 3px; margin: 8px 0 14px; display: grid; gap: 2px; }
.wells li { display: flex; align-items: center; gap: 6px; height: 28px; padding: 0 4px 0 5px; border: 1px solid #c8c6c4; border-radius: 2px; background: #edebe9; }
.wells li button:first-of-type { margin-left: auto; }
.switch { display: flex; justify-content: space-between; align-items: center; padding: 0 19px 0 9px; margin-top: 11px; }
.switch input { appearance: none; margin: 0; width: 40px; height: 20px; border: 1px solid #605e5c; border-radius: 10px; background: radial-gradient(circle at 10px 9px, #605e5c 5px, #fff 6px); }
.scroll { position: absolute; right: 0; top: 2px; width: 7px; height: 133px; border-radius: 4px; background: #d2d0ce; }

.fields { width: 224px; position: relative; }
.fields header { padding-right: 8px; padding-left: 10px; }
.search { display: flex; align-items: center; height: 33px; margin: 7px 4px 11px 5px; padding: 0 9px; gap: 6px; border: 1px solid #605e5c; border-radius: 2px; background: #fff; font-size: 18px; }
.search input { flex: 1; min-width: 0; border: 0; outline: 0; padding: 0; font: inherit; background: none; }
.search input::placeholder { color: #484644; opacity: 1; }
.node { display: flex; align-items: center; height: 30px; }
.root { padding-left: 9px; gap: 1px; }
.root .tbl { margin-top: 6px; }
.leaf { padding-left: 48px; }
.branch { padding-left: 29px; gap: 9px; }
.branch label { display: flex; align-items: center; }
.kind { width: 20px; margin: 0 6px; }
.tree input { appearance: none; flex: none; margin: 0; width: 15px; height: 15px; border: 1px solid #797775; border-radius: 2px; background: #fff; }
.tree input:checked { border-color: #117865; background: #117865; display: grid; place-items: center; }
.tree input:checked::after { content: ""; width: 9px; height: 5px; border: solid #fff; border-width: 0 0 2px 2px; transform: rotate(-45deg); margin-bottom: 3px; }
.callout { position: absolute; left: -14px; top: 180px; pointer-events: none; filter: drop-shadow(2px 3px 2px rgba(0, 0, 0, .4)); }

/* status bar */
.status { height: 28px; flex: none; display: flex; justify-content: space-between; align-items: center; padding: 0 27px 0 7px; border-top: 1px solid #e1dfdd; color: #484644; position: relative; background: #f3f2f1; }
.zoom { display: flex; align-items: center; font-size: 14px; }
.zoom input { appearance: none; width: 125px; height: 14px; margin: 0 8px 0 4px; background: linear-gradient(#484644, #484644) 50% 50% / 1px 7px no-repeat, linear-gradient(#484644, #484644) 50% 50% / 100% 1px no-repeat; }
.zoom input::-webkit-slider-thumb { appearance: none; width: 5px; height: 13px; background: #333; }
.zoom output { margin: 0 24px 0 20px; }
```
